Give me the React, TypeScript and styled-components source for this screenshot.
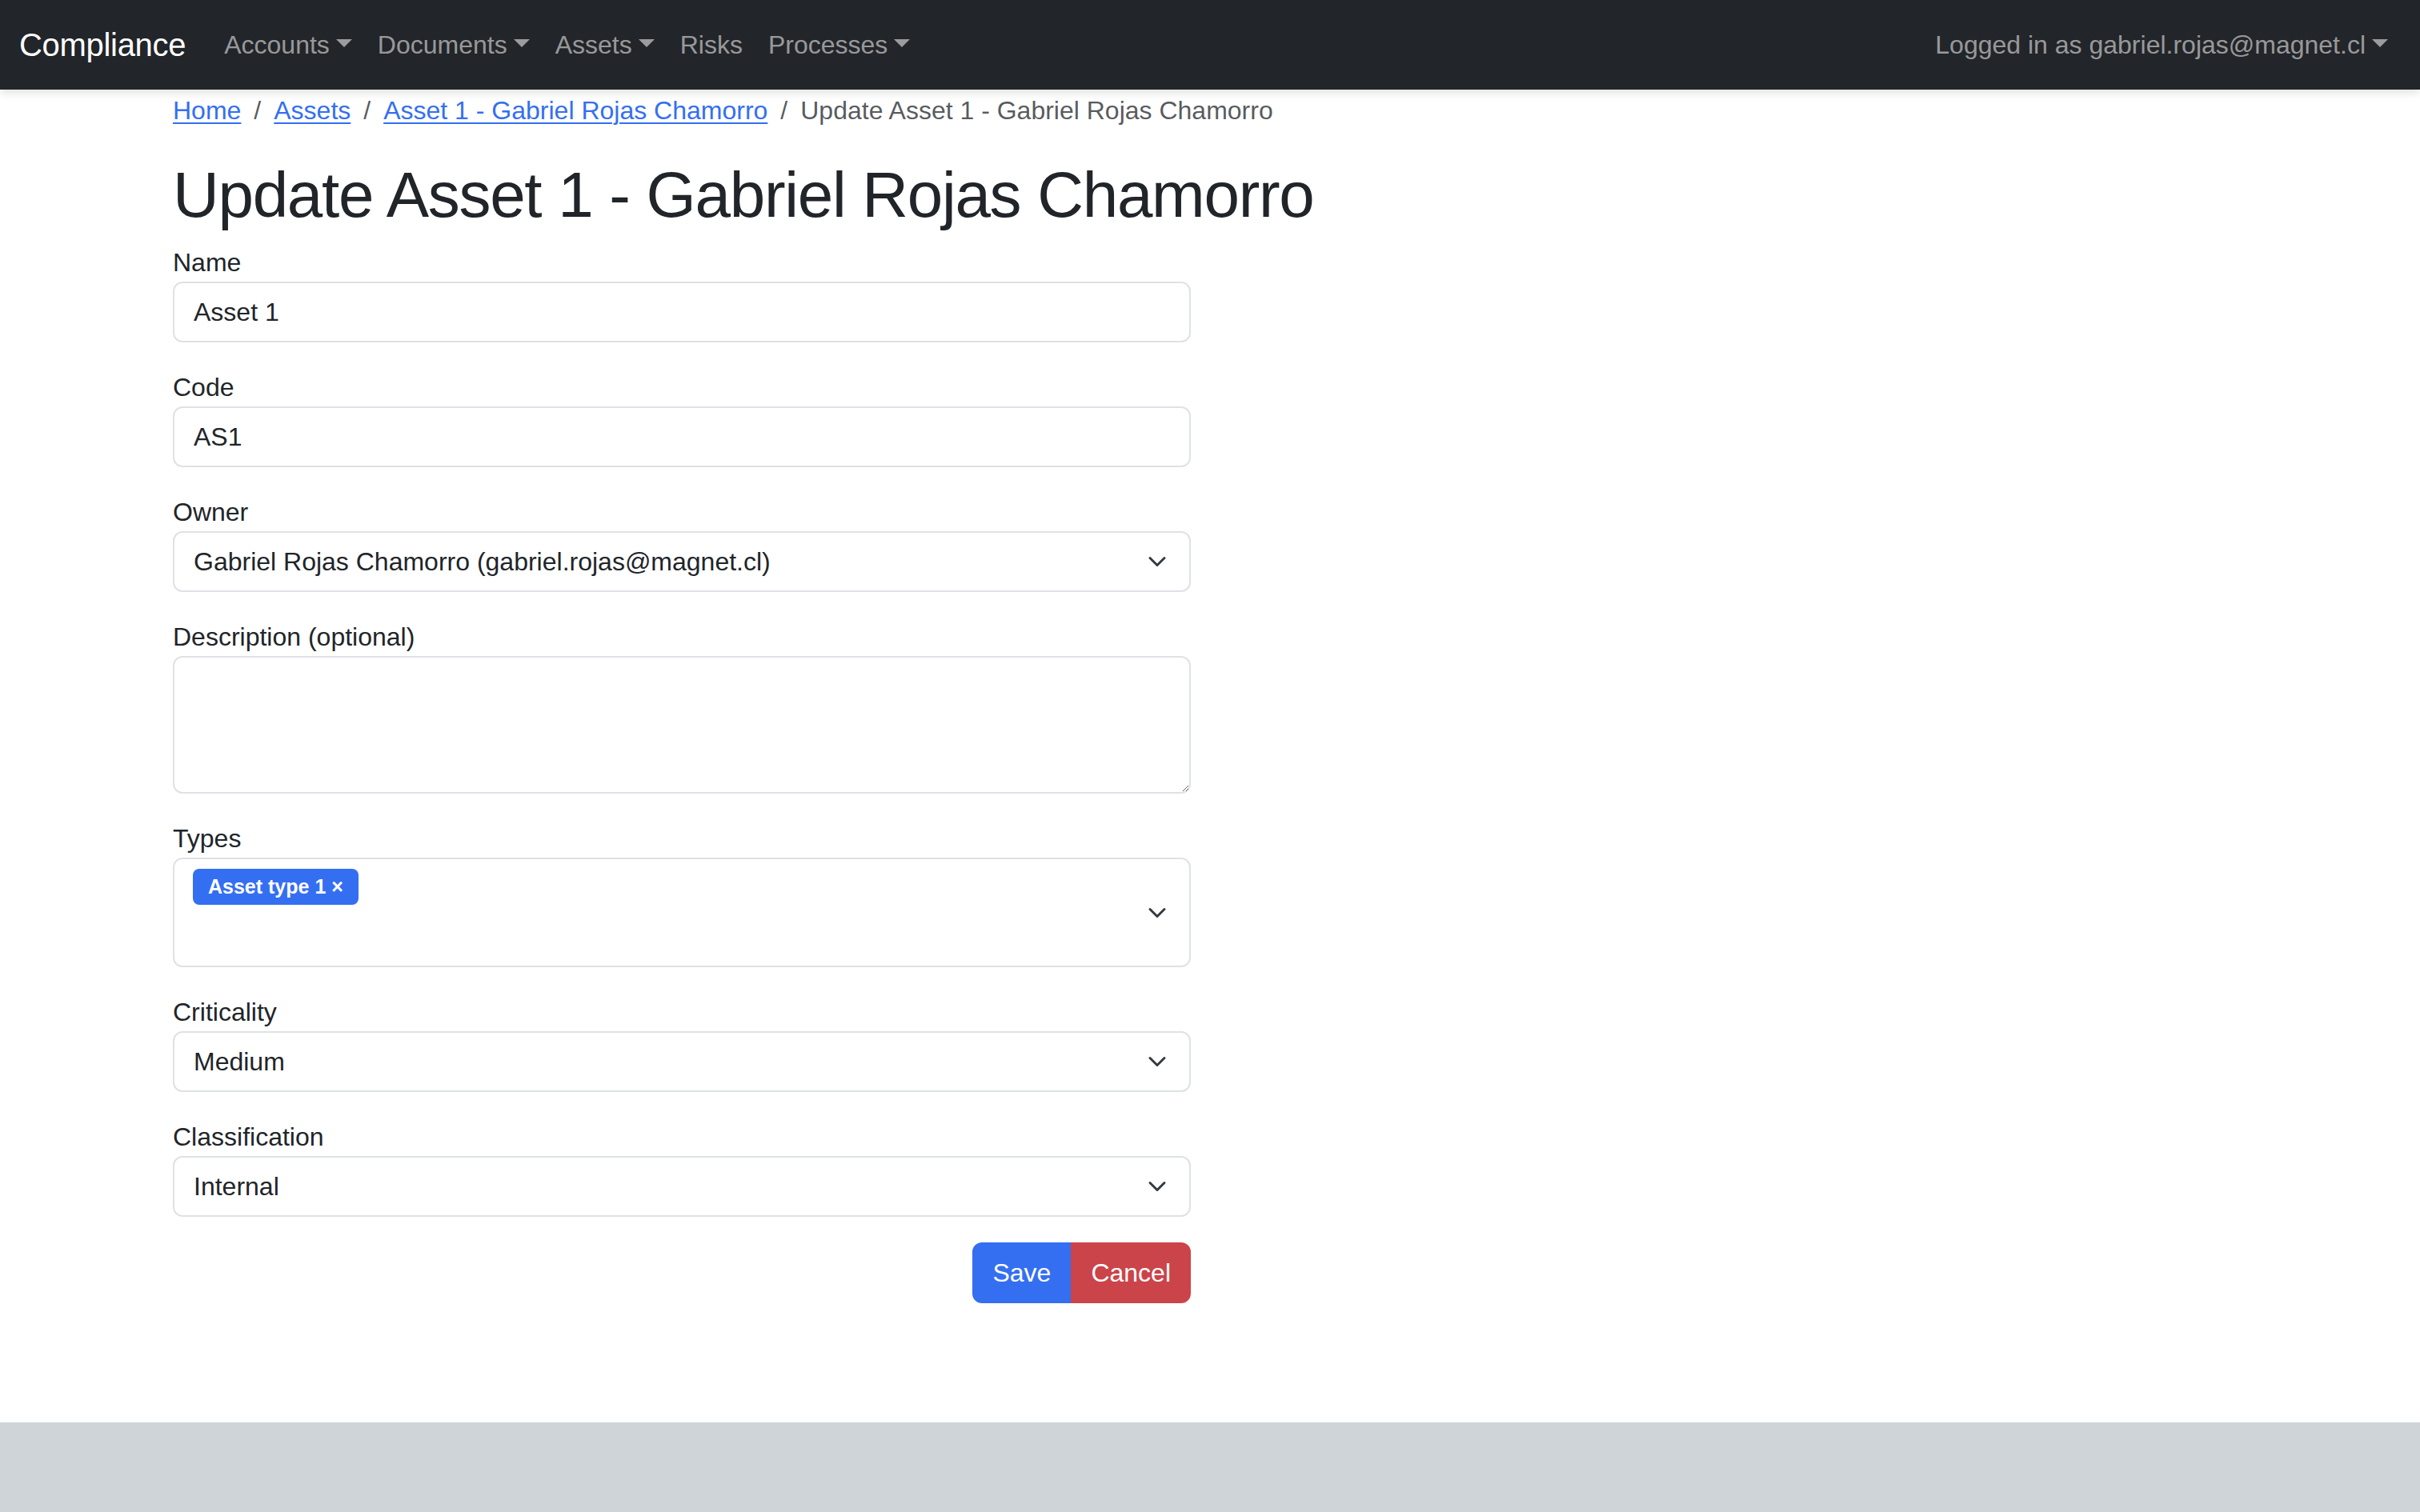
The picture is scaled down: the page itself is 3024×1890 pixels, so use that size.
import React from 'react'
import styled, { createGlobalStyle } from 'styled-components'

const GlobalStyle = createGlobalStyle`
    html, body {
        margin: 0;
        padding: 0;
    }
    body {
        font-family: "Liberation Sans", Arial, sans-serif;
        font-size: 32px;
        line-height: 1.5;
        color: #212529;
        background: #ffffff;
    }
    *, *::before, *::after {
        box-sizing: border-box;
    }
`

const Page = styled.div`
    min-height: 100vh;
    display: flex;
    flex-direction: column;
`

const Navbar = styled.nav`
    background: #222529;
    padding: 16px 24px;
    display: flex;
    align-items: center;
    box-shadow: 0 4px 10px rgba(0, 0, 0, 0.12);
    position: relative;
    z-index: 1;
`

const Brand = styled.a`
    color: #ffffff;
    font-size: 40px;
    line-height: 1.5;
    letter-spacing: -0.3px;
    padding: 10px 0;
    margin-right: 32px;
    text-decoration: none;
`

const NavList = styled.div`
    display: flex;
    align-items: center;
    flex-grow: 1;
`

const NavLink = styled.a<{ $caret?: boolean }>`
    color: rgba(255, 255, 255, 0.55);
    padding: 16px;
    text-decoration: none;
    line-height: 48px;
    ${p => p.$caret && `
        &::after {
            content: "";
            display: inline-block;
            margin-left: 8px;
            vertical-align: 8px;
            border-top: 10px solid;
            border-right: 10px solid transparent;
            border-left: 10px solid transparent;
            border-bottom: 0;
        }
    `}
`

const Main = styled.main`
    width: 100%;
    max-width: 2640px;
    margin: 0 auto;
    padding: 0 24px;
`

const Crumbs = styled.ol`
    display: flex;
    list-style: none;
    margin: 2px 0 32px;
    padding: 0;
`

const Crumb = styled.li<{ $active?: boolean }>`
    color: ${p => (p.$active ? 'rgba(33, 37, 41, 0.75)' : 'inherit')};
    &:not(:first-child)::before {
        content: "/";
        color: rgba(33, 37, 41, 0.75);
        padding: 0 16px;
    }
    a {
        color: #346ff2;
        text-decoration: underline;
        text-underline-offset: 4px;
        text-decoration-thickness: 2px;
    }
`

const Title = styled.h1`
    font-size: 80px;
    font-weight: 400;
    line-height: 1.2;
    letter-spacing: -1.3px;
    margin: 0 0 12px;
    padding-top: 2px;
`

const FormColumn = styled.form`
    width: calc((100% + 48px) / 2 - 48px);
`

const Group = styled.div`
    margin-bottom: 32px;
`

const Label = styled.label`
    display: block;
`

const Input = styled.input`
    display: block;
    width: 100%;
    height: 76px;
    padding: 12px 24px;
    font: inherit;
    color: #212529;
    border: 2px solid #dee2e6;
    border-radius: 12px;
    outline: none;
`

const TextArea = styled.textarea`
    display: block;
    width: 100%;
    height: 172px;
    padding: 12px 24px;
    font: inherit;
    color: #212529;
    border: 2px solid #dee2e6;
    border-radius: 12px;
    resize: vertical;
    outline: none;
`

const SelectBox = styled.div<{ $tall?: boolean }>`
    display: flex;
    align-items: center;
    justify-content: space-between;
    min-height: ${p => (p.$tall ? '137px' : '76px')};
    padding: ${p => (p.$tall ? '12px 28px 12px 23px' : '12px 28px 12px 24px')};
    border: 2px solid #dee2e6;
    border-radius: 12px;
    background: #ffffff;
`

const TagArea = styled.div`
    align-self: flex-start;
    display: flex;
    flex-wrap: wrap;
    gap: 8px;
`

const Tag = styled.span`
    display: inline-block;
    background: #346ff2;
    color: #ffffff;
    font-size: 25px;
    font-weight: 700;
    line-height: 36px;
    padding: 4px 19px 5px;
    border-radius: 8px;
`

const Actions = styled.div`
    display: flex;
    justify-content: flex-end;
`

const Btn = styled.button<{ $variant: 'primary' | 'danger' }>`
    font: inherit;
    color: #ffffff;
    padding: 12px 23px;
    border: 2px solid ${p => (p.$variant === 'primary' ? '#346ff2' : '#cb444a')};
    background: ${p => (p.$variant === 'primary' ? '#346ff2' : '#cb444a')};
    border-radius: 0;
    &:first-child {
        border-radius: 12px 0 0 12px;
    }
    &:last-child {
        border-radius: 0 12px 12px 0;
    }
`

const Footer = styled.footer`
    margin-top: auto;
    height: 112px;
    background: #cfd4d8;
`

const Chevron = () => (
    <svg width="24" height="24" viewBox="0 0 16 16" fill="none">
        <path d="m2 5 6 6 6-6" stroke="#343a40" strokeWidth="2" strokeLinecap="round" strokeLinejoin="round" />
    </svg>
)

const App = () => {
    return (
        <Page>
            <GlobalStyle />
            <Navbar>
                <Brand href="#">Compliance</Brand>
                <NavList>
                    <NavLink href="#" $caret>Accounts</NavLink>
                    <NavLink href="#" $caret>Documents</NavLink>
                    <NavLink href="#" $caret>Assets</NavLink>
                    <NavLink href="#">Risks</NavLink>
                    <NavLink href="#" $caret>Processes</NavLink>
                </NavList>
                <NavLink href="#" $caret>Logged in as gabriel.rojas@magnet.cl</NavLink>
            </Navbar>
            <Main>
                <nav>
                    <Crumbs>
                        <Crumb><a href="#">Home</a></Crumb>
                        <Crumb><a href="#">Assets</a></Crumb>
                        <Crumb><a href="#">Asset 1 - Gabriel Rojas Chamorro</a></Crumb>
                        <Crumb $active>Update Asset 1 - Gabriel Rojas Chamorro</Crumb>
                    </Crumbs>
                </nav>
                <Title>Update Asset 1 - Gabriel Rojas Chamorro</Title>
                <FormColumn onSubmit={e => e.preventDefault()}>
                    <Group>
                        <Label>Name</Label>
                        <Input type="text" defaultValue="Asset 1" />
                    </Group>
                    <Group>
                        <Label>Code</Label>
                        <Input type="text" defaultValue="AS1" />
                    </Group>
                    <Group>
                        <Label>Owner</Label>
                        <SelectBox>
                            <span>Gabriel Rojas Chamorro (gabriel.rojas@magnet.cl)</span>
                            <Chevron />
                        </SelectBox>
                    </Group>
                    <Group>
                        <Label>Description (optional)</Label>
                        <TextArea rows={3} />
                    </Group>
                    <Group>
                        <Label>Types</Label>
                        <SelectBox $tall>
                            <TagArea>
                                <Tag>Asset type 1 ×</Tag>
                            </TagArea>
                            <Chevron />
                        </SelectBox>
                    </Group>
                    <Group>
                        <Label>Criticality</Label>
                        <SelectBox>
                            <span>Medium</span>
                            <Chevron />
                        </SelectBox>
                    </Group>
                    <Group>
                        <Label>Classification</Label>
                        <SelectBox>
                            <span>Internal</span>
                            <Chevron />
                        </SelectBox>
                    </Group>
                    <Actions>
                        <Btn type="submit" $variant="primary">Save</Btn>
                        <Btn type="button" $variant="danger">Cancel</Btn>
                    </Actions>
                </FormColumn>
            </Main>
            <Footer />
        </Page>
    )
}

export default App
